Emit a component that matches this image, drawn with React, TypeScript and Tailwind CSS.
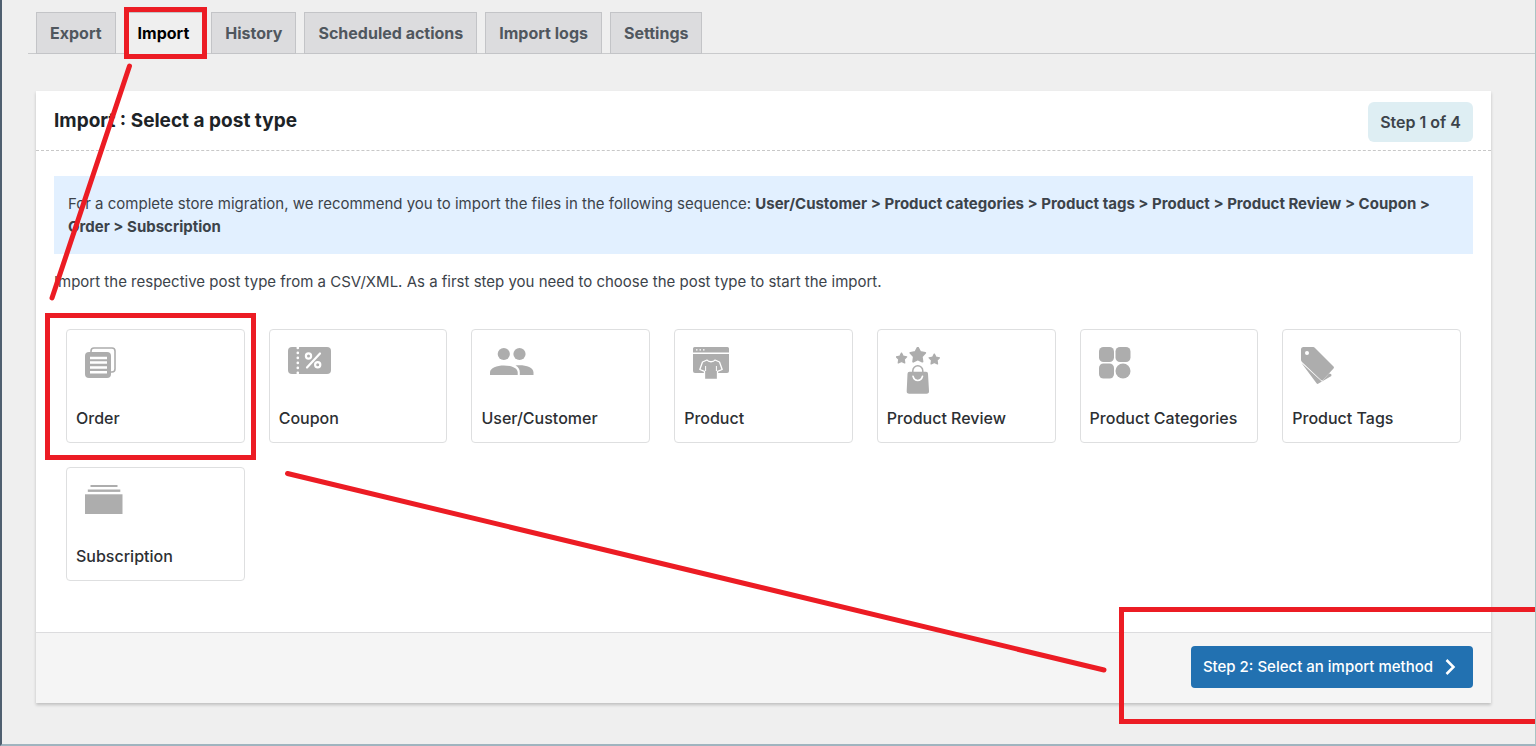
import { useState } from 'react';
import type { ReactNode } from 'react';

type PostType = {
    id: string;
    label: string;
    icon: ReactNode;
};

const tabs = ['Export', 'Import', 'History', 'Scheduled actions', 'Import logs', 'Settings'];

const star = 'M0 -10 L3.1 -4.2 L9.5 -3.1 L5 1.6 L5.9 8.1 L0 5.2 L-5.9 8.1 L-5 1.6 L-9.5 -3.1 L-3.1 -4.2 Z';

const postTypes: PostType[] = [
    {
        id: 'order',
        label: 'Order',
        icon: (
            <svg width="32" height="32" viewBox="0 0 32 32" fill="currentColor">
                <path d="M6 7V4a3 3 0 0 1 3-3h18a3 3 0 0 1 3 3v18a3 3 0 0 1-3 3h-2" fill="none" stroke="currentColor" strokeWidth="1.6" />
                <rect x="0" y="5" width="26" height="26" rx="4" />
                <path d="M5 11h17M5 15.5h17M5 20.5h17M5 25.2h17" stroke="#fff" strokeWidth="2.4" />
            </svg>
        ),
    },
    {
        id: 'coupon',
        label: 'Coupon',
        icon: (
            <svg width="43" height="27" viewBox="0 0 43 27" fill="currentColor">
                <rect width="43" height="27" rx="4" />
                <path d="M9.8 0.8v26" stroke="#fff" strokeWidth="2.6" strokeLinecap="round" strokeDasharray="0.1 4.9" />
                <g fill="none" stroke="#fff" strokeWidth="2.2">
                    <circle cx="20.5" cy="9" r="2.6" />
                    <circle cx="29.7" cy="17.7" r="2.6" />
                    <path d="M32 6.5 19 20.5" strokeLinecap="round" />
                </g>
            </svg>
        ),
    },
    {
        id: 'user',
        label: 'User/Customer',
        icon: (
            <svg width="44" height="28" viewBox="0 0 44 28" fill="currentColor">
                <circle cx="13.8" cy="7" r="6.1" />
                <circle cx="29.5" cy="7" r="6.1" />
                <path d="M0 28v-2.5C0 20.5 7 18.4 13.8 18.4S27.7 20.5 27.7 25.5V28Z" />
                <path d="M25.5 18.6C34 17.5 43.5 20 43.5 25.5V28H29.8v-2.5C29.8 22.5 28.5 20.3 25.5 18.6Z" />
            </svg>
        ),
    },
    {
        id: 'product',
        label: 'Product',
        icon: (
            <svg width="36" height="33" viewBox="0 0 36 33" fill="currentColor">
                <path d="M1.5 0h33A1.5 1.5 0 0 1 36 1.5V5.5H0v-4A1.5 1.5 0 0 1 1.5 0Z" />
                <path d="M3 2.8h1.5M6.5 2.8H8M10 2.8h1.5" stroke="#fff" strokeWidth="1.3" />
                <path d="M0 7h36v17a2 2 0 0 1-2 2H2a2 2 0 0 1-2-2Z" />
                <path
                    d="M14 13 9.5 15 6.8 22.5 11.5 24.3V32.5H24.5V24.3L29.2 22.5 26.5 15 22 13C20.5 15.3 15.5 15.3 14 13Z"
                    stroke="#fff"
                    strokeWidth="1.3"
                    strokeLinejoin="round"
                />
                <path d="M12.6 19v5M23.4 19v5" stroke="#fff" strokeWidth="1" />
            </svg>
        ),
    },
    {
        id: 'review',
        label: 'Product Review',
        icon: (
            <svg width="44" height="47" viewBox="0 0 44 47" fill="currentColor">
                <g stroke="currentColor" strokeWidth="2.5" strokeLinejoin="round">
                    <path d={star} transform="translate(5.5 11.5) scale(0.54)" />
                    <path d={star} transform="translate(21.8 8.3) scale(0.78)" />
                    <path d={star} transform="translate(38.3 12.5) scale(0.54)" />
                </g>
                <path d="M16.8 26v-2.3a5 5 0 0 1 10 0V26" fill="none" stroke="currentColor" strokeWidth="1.5" />
                <path d="M13.5 24.8h16.5a2 2 0 0 1 2 2L33 44a2.5 2.5 0 0 1-2.5 2.7H13.2A2.5 2.5 0 0 1 10.7 44l.8-17.2a2 2 0 0 1 2-2Z" />
                <path d="M17 29.3c1.5 5.5 8 5.5 9.5 0" fill="none" stroke="#fff" strokeWidth="1.6" strokeLinecap="round" />
            </svg>
        ),
    },
    {
        id: 'categories',
        label: 'Product Categories',
        icon: (
            <svg width="32" height="32" viewBox="0 0 32 32" fill="currentColor">
                <rect x="0" y="0" width="15" height="15" rx="4.5" />
                <rect x="16.5" y="0" width="15" height="15" rx="4.5" />
                <rect x="0" y="16.5" width="15" height="15" rx="4.5" />
                <circle cx="24" cy="24" r="7.5" />
            </svg>
        ),
    },
    {
        id: 'tags',
        label: 'Product Tags',
        icon: (
            <svg width="33" height="38" viewBox="0 0 33 38" fill="currentColor">
                <path d="M0.5 16 15.5 36.3a1.5 1.5 0 0 0 2 .3L29.5 29.5a1.5 1.5 0 0 0 .5-2.5L28 26.5 20.8 34.5Z" />
                <path
                    d="M0 2.5A2.5 2.5 0 0 1 2.5 0H11.5a3 3 0 0 1 2.5 1L32.5 19.5a1.5 1.5 0 0 1 0 2L22 33a1.5 1.5 0 0 1-2 0L1 15A3 3 0 0 1 0 13Z"
                />
                <circle cx="6" cy="6" r="2" fill="#fff" />
            </svg>
        ),
    },
    {
        id: 'subscription',
        label: 'Subscription',
        icon: (
            <svg width="38" height="29" viewBox="0 0 38 29" fill="currentColor">
                <rect x="5.5" y="0" width="27" height="2" />
                <rect x="2.8" y="4.5" width="32.5" height="2.4" />
                <rect x="0" y="9.3" width="37.5" height="19.7" />
            </svg>
        ),
    },
];

// red marker frame drawn around the parent element
function Marker({ className }: { className: string }) {
    return <span aria-hidden="true" className={`pointer-events-none absolute z-10 border-[5px] border-[#ec1c24] ${className}`} />;
}

export default function App() {
    const [activeTab, setActiveTab] = useState('Import');
    const [selected, setSelected] = useState('');

    return (
        <div className="relative min-h-screen overflow-hidden border-r border-b-2 border-l-2 border-r-[#a9c4c4] border-b-[#9fb4bf] border-l-[#4f5f70] bg-[#efefef] font-['Inter','Liberation_Sans',sans-serif] text-[#3c434a]">
            <nav className="ml-[26px] flex items-end gap-2 border-b border-[#c9cacc] px-2 pt-3">
                {tabs.map((tab) => (
                    <a
                        key={tab}
                        href="#"
                        onClick={() => setActiveTab(tab)}
                        className={`relative -mb-px border border-[#c3c4c7] px-[13px] pt-2 pb-2 text-base leading-6 font-bold ${
                            tab === activeTab ? 'border-b-[#efefef] bg-[#efefef] text-black' : 'bg-[#dcdcde] text-[#50575e]'
                        }`}
                    >
                        {tab}
                        {tab === 'Import' && <Marker className="-inset-y-[6px] -right-[5px] -left-px" />}
                    </a>
                ))}
            </nav>

            <main className="mt-[37px] mr-11 mb-10 ml-[34px] bg-white shadow-[0_2px_3px_#00000033]">
                <header className="flex items-start justify-between border-b border-dashed border-[#c8c8c8] px-[18px] pt-[11px] pb-2">
                    <h1 className="pt-[5px] text-[19px] leading-7 font-bold text-[#1d2327]">Import : Select a post type</h1>
                    <span className="rounded-md bg-[#deeef3] px-3 py-2 text-base leading-6 font-semibold">Step 1 of 4</span>
                </header>

                <div className="px-[18px] pt-[25px] pb-[51px]">
                    <p className="bg-[#e2f0ff] px-[14px] py-4 text-[15px] leading-[23px]">
                        For a complete store migration, we recommend you to import the files in the following sequence:{' '}
                        <b className="font-bold">
                            User/Customer &gt; Product categories &gt; Product tags &gt; Product &gt; Product Review &gt; Coupon &gt;
                        </b>{' '}
                        <b className="font-bold">Order &gt; Subscription</b>
                    </p>
                    <p className="mt-4 text-[15px] leading-[23px]">
                        Import the respective post type from a CSV/XML. As a first step you need to choose the post type to start the import.
                    </p>

                    <div className="mt-9 grid grid-cols-7 gap-6 px-3">
                        {postTypes.map((type) => (
                            <button
                                key={type.id}
                                type="button"
                                aria-pressed={selected === type.id}
                                onClick={() => setSelected(type.id)}
                                className="relative flex h-[114px] flex-col justify-between rounded border border-[#dedfe0] bg-white px-[9px] pt-[17px] pb-3 text-left"
                            >
                                <span className="pl-[9px] text-[#adadad]">{type.icon}</span>
                                <span className="text-base leading-6 font-medium whitespace-nowrap text-[#2c2f33]">{type.label}</span>
                                {type.id === 'order' && <Marker className="-top-[17px] -right-3 -bottom-[18px] -left-[22px]" />}
                            </button>
                        ))}
                    </div>
                </div>

                <footer className="flex justify-end border-t border-[#dcdcde] bg-[#f5f5f5] px-[18px] pt-[13px] pb-[15px]">
                    <div className="relative">
                        <button type="button" className="flex h-[42px] items-center gap-[11px] rounded bg-[#2271b1] pr-[17px] pl-3 text-[15px] leading-6 font-medium text-white">
                            Step 2: Select an import method
                            <svg width="12" height="18" viewBox="0 0 12 18" fill="none" stroke="currentColor" strokeWidth="2.5">
                                <path d="M2.5 2 9.5 9 2.5 16" />
                            </svg>
                        </button>
                        <Marker className="-top-[39px] -right-20 -bottom-9 -left-[72px]" />
                    </div>
                </footer>
            </main>

            {/* scroll marks on the left window edge */}
            <span className="absolute top-[181px] -left-0.5 h-10 w-0.5 border-y-[12px] border-[#4a9fdc] bg-[#e4e8ec]" />

            <svg className="pointer-events-none absolute top-0 -left-0.5 z-10" width="1120" height="700" stroke="#ec1c24" strokeWidth="5" strokeLinecap="round">
                <path d="M129.5 66 52 298" />
                <path d="M287.5 473.5 1104 670" />
            </svg>
        </div>
    );
}
